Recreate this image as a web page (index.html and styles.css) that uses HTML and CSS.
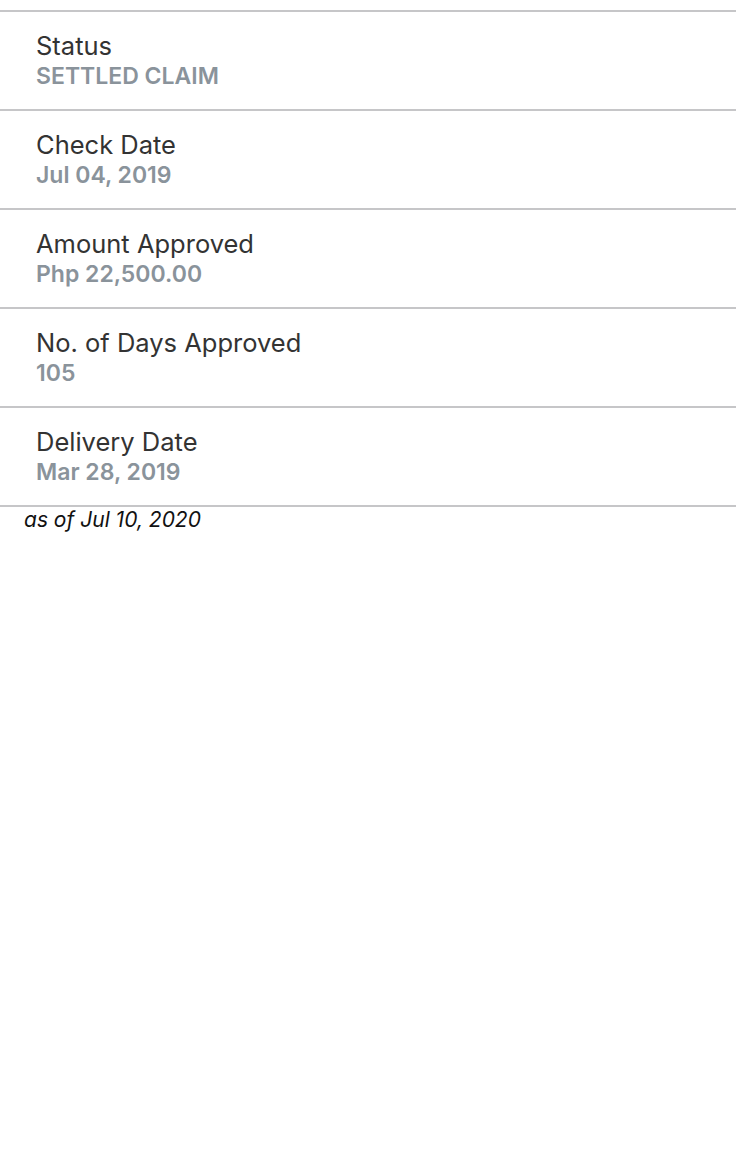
FILE: index.html
```html
<!DOCTYPE html>
<html>
<head>
<meta charset="utf-8">
<link rel="stylesheet" href="styles.css">
</head>
<body>
<div class="list">
  <div class="row"><div class="label">Status</div><div class="value">SETTLED CLAIM</div></div>
  <div class="row"><div class="label">Check Date</div><div class="value">Jul 04, 2019</div></div>
  <div class="row"><div class="label">Amount Approved</div><div class="value">Php 22,500.00</div></div>
  <div class="row"><div class="label">No. of Days Approved</div><div class="value">105</div></div>
  <div class="row"><div class="label">Delivery Date</div><div class="value">Mar 28, 2019</div></div>
</div>
<div class="asof">as of Jul 10, 2020</div>
</body>
</html>
```
FILE: styles.css
```css
html, body {
  margin: 0;
  padding: 0;
  background: #ffffff;
  font-family: Inter, "Liberation Sans", sans-serif;
}
.list {
  margin-top: 10px;
  border-top: 2px solid #c6c6c8;
}
.row {
  box-sizing: border-box;
  height: 99px;
  border-bottom: 2px solid #c6c6c8;
  padding: 18px 0 0 36px;
  display: flex;
  flex-direction: column;
  justify-content: flex-start;
}
.label {
  font-size: 25.5px;
  line-height: 31px;
  color: #333333;
}
.value {
  font-size: 23px;
  line-height: 31px;
  font-weight: 600;
  color: #8a939b;
}
.asof {
  padding-left: 24px;
  font-size: 21px;
  line-height: 26px;
  font-style: italic;
  color: #111111;
}
```
